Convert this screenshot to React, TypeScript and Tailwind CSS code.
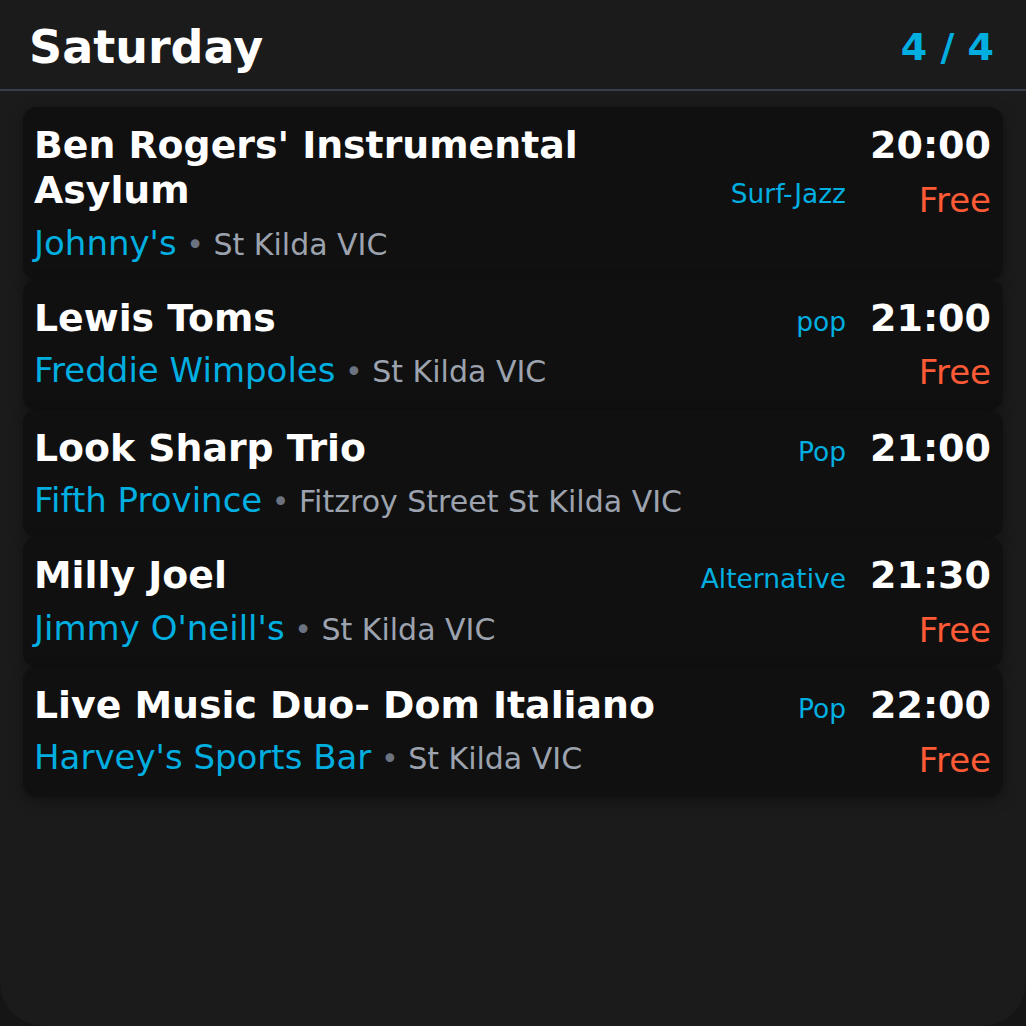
const gigs = [
  { title: "Ben Rogers' Instrumental Asylum", venue: "Johnny's", place: "St Kilda VIC", genre: "Surf-Jazz", time: "20:00", price: "Free" },
  { title: "Lewis Toms", venue: "Freddie Wimpoles", place: "St Kilda VIC", genre: "pop", time: "21:00", price: "Free" },
  { title: "Look Sharp Trio", venue: "Fifth Province", place: "Fitzroy Street St Kilda VIC", genre: "Pop", time: "21:00", price: "" },
  { title: "Milly Joel", venue: "Jimmy O'neill's", place: "St Kilda VIC", genre: "Alternative", time: "21:30", price: "Free" },
  { title: "Live Music Duo- Dom Italiano", venue: "Harvey's Sports Bar", place: "St Kilda VIC", genre: "Pop", time: "22:00", price: "Free" },
];

const App = () => {
  return (
    <div className="w-[1026px] h-[1026px] bg-[#151515] font-['DejaVu_Sans',sans-serif]">
      <div className="h-full bg-[#1b1b1b] rounded-b-[44px] flex flex-col">
        <div className="h-[91px] flex items-center justify-between pl-[29px] pr-[32px] pt-[4px] border-b-2 border-[#383e4a]">
          <h1 className="text-[46px] font-bold text-white leading-none">Saturday</h1>
          <span className="text-[38px] font-bold text-[#00aee0] leading-none">4 / 4</span>
        </div>
        <div className="px-[23px] pt-[16px] flex flex-col">
          {gigs.map((g, i) => (
            <div key={i} className="bg-[#101010] rounded-[14px] shadow-[0_4px_14px_rgba(0,0,0,0.35)] flex gap-6 pl-[11px] pr-[12px] pt-[16px] pb-[15px]">
              <div className="flex-1 min-w-0 flex flex-col gap-[7px]">
                <div className="flex gap-6 [align-items:last_baseline]">
                  <h2 className="flex-1 text-[37.8px] leading-[1.2] font-bold text-white">{g.title}</h2>
                  <span className="text-[26.5px] leading-[1.3] text-[#00aee0]">{g.genre}</span>
                </div>
                <p className="text-[34px] leading-[1.3] text-[#00aee0] whitespace-nowrap">
                  {g.venue}
                  <span className="text-[30px] text-[#6b7280]"> • </span>
                  <span className="text-[30px] text-[#9ca3af]">{g.place}</span>
                </p>
              </div>
              <div className="flex flex-col items-end gap-[9px]">
                <span className="text-[38px] leading-[1.2] font-bold text-white">{g.time}</span>
                {g.price && <span className="text-[34px] leading-[1.3] text-[#ff5a36]">{g.price}</span>}
              </div>
            </div>
          ))}
        </div>
      </div>
    </div>
  );
};

export default App;
